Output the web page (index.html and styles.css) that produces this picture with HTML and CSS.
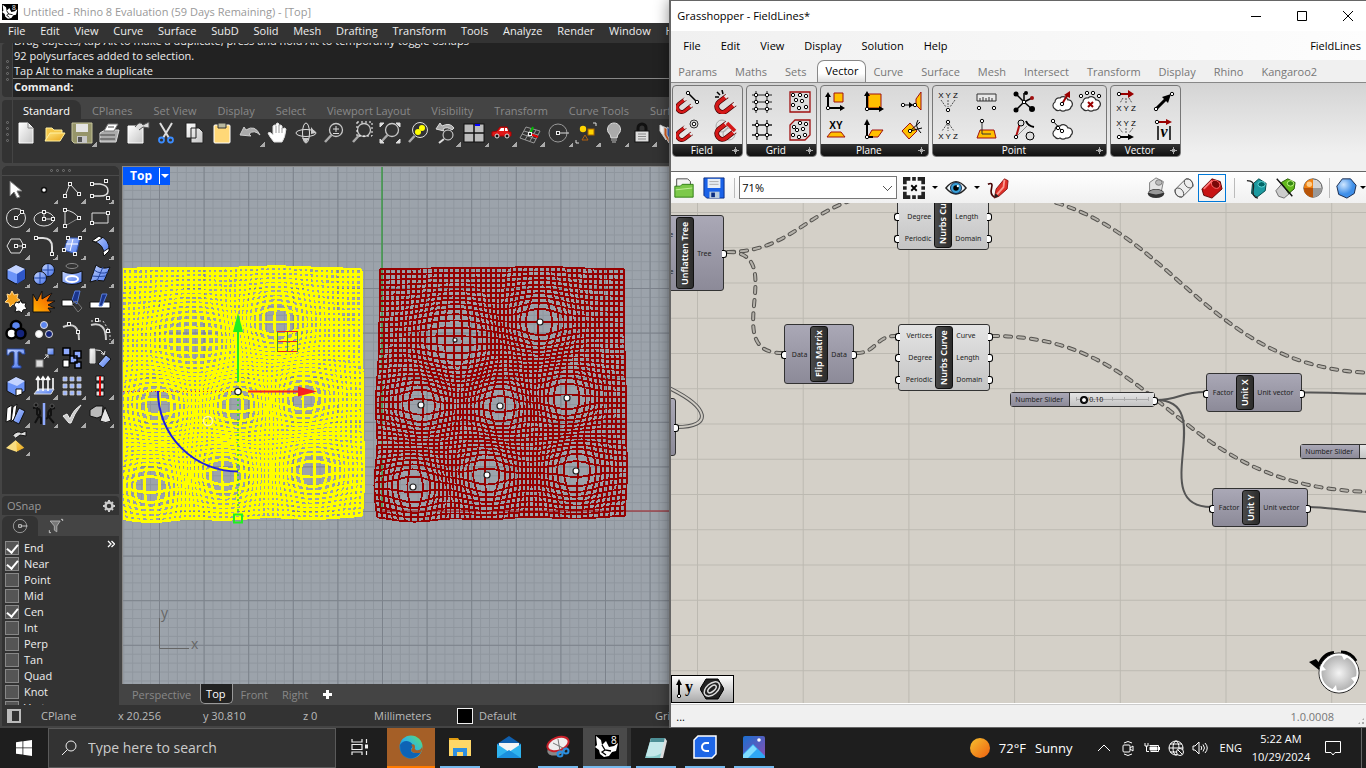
FILE: index.html
```
<!DOCTYPE html>
<html lang="en">
<head>
  <meta charset="UTF-8">
  <meta name="viewport" content="width=device-width, initial-scale=1.0">
  <title>Rhino and Grasshopper</title>
  <link rel="stylesheet" href="styles.css">
</head>
<body>

<!-- shared icon parts -->
<svg class="defs" aria-hidden="true">
  <defs>
    <linearGradient id="blue" x1="0" y1="0" x2="1" y2="1"><stop offset="0" stop-color="#c9d8ff"/><stop offset="1" stop-color="#4472ec"/></linearGradient>
    <linearGradient id="paper" x1="0" y1="0" x2="1" y2="1"><stop offset="0" stop-color="#fff"/><stop offset="1" stop-color="#c4c4c4"/></linearGradient>
    <linearGradient id="gold" x1="0" y1="0" x2="1" y2="1"><stop offset="0" stop-color="#ffe680"/><stop offset="1" stop-color="#e8a417"/></linearGradient>
    <linearGradient id="fire" x1="0" y1="1" x2="1" y2="0"><stop offset="0" stop-color="#ffb300"/><stop offset="1" stop-color="#f04a00"/></linearGradient>
    <linearGradient id="sun" x1="0" y1="0" x2="1" y2="1"><stop offset="0" stop-color="#f6c12f"/><stop offset="1" stop-color="#ee5f10"/></linearGradient>
    <linearGradient id="edge" x1="0" y1="1" x2="1" y2="0"><stop offset="0" stop-color="#0c59a4"/><stop offset=".5" stop-color="#2bb3e6"/><stop offset="1" stop-color="#5fe06a"/></linearGradient>
    <linearGradient id="photo" x1="0" y1="0" x2="1" y2="1"><stop offset="0" stop-color="#1a6fd0"/><stop offset="1" stop-color="#8a4fb0"/></linearGradient>
    <radialGradient id="dial"><stop offset="0" stop-color="#f4f4f4"/><stop offset="1" stop-color="#a9a9a9"/></radialGradient>
    <radialGradient id="ball" cx=".35" cy=".3"><stop offset="0" stop-color="#cfe6ff"/><stop offset="1" stop-color="#3f8fe8"/></radialGradient>
    <g id="pt"><rect x="-1.5" y="-1.5" width="3" height="3" fill="#222" stroke="#eee" stroke-width="1"/></g>
    <g id="dot"><circle r="1.7" fill="#fff" stroke="#000" stroke-width="1"/></g>
    <g id="lens"><circle cx="14" cy="9" r="6.5" fill="none" stroke="#c8c8c8" stroke-width="1.3"/><path d="M9.500 14L3 21" stroke="#aaa" stroke-width="2.500"/></g>
    <g id="magnet"><path d="M13 5L5 11a5.500 5.500 0 0 0 7 9L21 13" fill="none" stroke="#400" stroke-width="5"/><path d="M13 5L5 11a5.500 5.500 0 0 0 7 9L21 13" fill="none" stroke="#d41818" stroke-width="3.500"/><path d="M14 4l-3 2.500M22 12.200l-3 2.500" fill="none" stroke="#e4e4e4" stroke-width="3.500"/></g>
    <g id="cloud"><path d="M5 19a4 4 0 0 1 0-7 4 4 0 0 1 5-4 5 5 0 0 1 8 2 4 4 0 0 1 3 7 4 4 0 0 1-5 3 5 5 0 0 1-6 0 4 4 0 0 1-5-1z" fill="#fff" stroke="#333" stroke-width="1.200"/></g>
    <g id="rhino"><rect width="24" height="24" fill="#000"/><path d="M1 1l5 4 1 5 4-4 3 6 5-1 4-3-2 8-4 1-3 4-5 1-4-3-1-4-4-3 2-2z" fill="#fff"/><path d="M7 10l3 5 6 1M10 15l-3 2 4 3" stroke="#000" stroke-width="1.300" fill="none"/></g>
  </defs>
</svg>

<div class="desktop">

  <section class="rhino">
    <header class="rhino-title">
      <svg class="app-icon" viewBox="0 0 24 24"><use href="#rhino"/><text x="15" y="9" class="rhino-eight">8</text></svg>
      Untitled - Rhino 8 Evaluation (59 Days Remaining) - [Top]
    </header>

    <nav class="rhino-menu">
      <a href="#">File</a><a href="#">Edit</a><a href="#">View</a><a href="#">Curve</a><a href="#">Surface</a><a href="#">SubD</a><a href="#">Solid</a><a href="#">Mesh</a><a href="#">Drafting</a><a href="#">Transform</a><a href="#">Tools</a><a href="#">Analyze</a><a href="#">Render</a><a href="#">Window</a><a href="#">Help</a>
    </nav>

    <div class="docked command">
      <div class="grip"><i></i><i></i><i></i><i></i></div>
      <div class="command-area">
        <div class="command-log">
          <p>Drag objects, tap Alt to make a duplicate, press and hold Alt to temporarily toggle osnaps</p>
          <p>92 polysurfaces added to selection.</p>
          <p>Tap Alt to make a duplicate</p>
        </div>
        <label class="prompt">Command: <input type="text" class="prompt-input"></label>
      </div>
    </div>

    <div class="docked toolbar">
      <div class="grip"><i></i><i></i><i></i><i></i></div>
      <div class="toolbar-area">
        <nav class="toolbar-tabs">
          <a href="#" class="active">Standard</a><a href="#">CPlanes</a><a href="#">Set View</a><a href="#">Display</a><a href="#">Select</a><a href="#">Viewport Layout</a><a href="#">Visibility</a><a href="#">Transform</a><a href="#">Curve Tools</a><a href="#">Surface Tools</a>
        </nav>
        <div class="toolbar-icons">
          <button class="tool" aria-label="New"><svg viewBox="0 0 24 24"><path d="M5 2h9l5 5v15H5z" fill="url(#paper)" stroke="#fff"/><path d="M14 2v5h5" stroke="#888"/></svg></button>
          <button class="tool" aria-label="Open"><svg viewBox="0 0 24 24"><path d="M4 20V7h6l2 2h8v3" fill="#f5c84a" stroke="#fff0a0"/><path d="M3 20l5-8h15l-5 8z" fill="url(#gold)" stroke="#fff0a0"/></svg></button>
          <button class="tool more" aria-label="Save"><svg viewBox="0 0 24 24"><path d="M2 2h20v20H4l-2-2z" fill="#96956a" stroke="#c6c49b"/><path d="M6 3h12v8H6z" fill="#e4e4e4" stroke="none"/><path d="M7 15h10v7H7z" fill="#c8c8c8" stroke="none"/><path d="M8 16h4v5H8z" fill="#555" stroke="none"/></svg></button>
          <button class="tool" aria-label="Print"><svg viewBox="0 0 24 24"><path d="M2 12l5-3h14l-3 12H2z" fill="#aaa" stroke="#ddd"/><path d="M6 10l4-7h10l-4 7z" fill="#fff" stroke="#777"/><path d="M2 14h15M2 18h15M10 6h6" stroke="#444"/></svg></button>
          <button class="tool" aria-label="Properties"><svg viewBox="0 0 24 24"><path d="M2 5h15v17H2z" fill="url(#paper)" stroke="#fff"/><path d="M9 6q5-7 8-2l6-3v6l-6-1-4 3" fill="#ddd" stroke="#555"/></svg></button>
          <button class="tool" aria-label="Cut"><svg viewBox="0 0 24 24"><path d="M6 2l9 15M18 2L9 17" stroke="#ddd" stroke-width="2"/><circle cx="7.500" cy="19" r="2.500" stroke="#3b8cff" stroke-width="1.800"/><circle cx="16.500" cy="19" r="2.500" stroke="#3b8cff" stroke-width="1.800"/></svg></button>
          <button class="tool" aria-label="Copy"><svg viewBox="0 0 24 24"><path d="M4 2h10v15H4zM9 7h8l4 4v11H9z" fill="url(#paper)" stroke="#222"/></svg></button>
          <button class="tool" aria-label="Paste"><svg viewBox="0 0 24 24"><rect x="4" y="4" width="16" height="18" rx="1" fill="#ffd877" stroke="#fff"/><path d="M8 2h8v5H8z" fill="#b9b9a0" stroke="#333"/></svg></button>
          <button class="tool more" aria-label="Undo"><svg viewBox="0 0 24 24"><path d="M2 14l4-8 2 3q9-6 14 5-6-6-11-1l2 2z" fill="#aaa" stroke="#ccc"/></svg></button>
          <button class="tool" aria-label="Pan"><svg viewBox="0 0 24 24"><path d="M8 21q-5-6-6-9 2-2 5 2V5q2-2 3 0V3q2-2 3 0v2q2-2 3 0v3q3-2 4 0-1 9-4 13z" fill="#fff" stroke="#ddd"/><path d="M10 5v7M13 4v8M16 7v5" stroke="#999"/></svg></button>
          <button class="tool" aria-label="Rotate view"><svg viewBox="0 0 24 24"><ellipse cx="12" cy="12" rx="10" ry="3.500"/><ellipse cx="12" cy="12" rx="3.500" ry="10"/><path d="M17 6l5 6-5 1zM8 17l4 5 3-5z" fill="#ccc" stroke="none"/></svg></button>
          <button class="tool" aria-label="Zoom"><svg viewBox="0 0 24 24"><use href="#lens"/><path d="M11 8h6M14 5v6M11 12.500h6"/></svg></button>
          <button class="tool" aria-label="Zoom window"><svg viewBox="0 0 24 24"><use href="#lens"/><path d="M7 1h15v14H7z" stroke="#fff" stroke-dasharray="2 2"/></svg></button>
          <button class="tool" aria-label="Zoom extents"><svg viewBox="0 0 24 24"><use href="#lens"/><path d="M2 2h4l-4 4zM22 2v4l-4-4zM22 22h-4l4-4zM2 22v-4l4 4z" fill="#ddd"/></svg></button>
          <button class="tool" aria-label="Zoom selected"><svg viewBox="0 0 24 24"><circle cx="14" cy="9" r="7.500"/><path d="M8.500 15L3 21" stroke="#aaa" stroke-width="2.500"/><circle cx="16" cy="7" r="3" fill="#ff0" stroke="none"/><circle cx="12" cy="11" r="3" fill="#ff0" stroke="none"/></svg></button>
          <button class="tool more" aria-label="Undo view"><svg viewBox="0 0 24 24"><path d="M2 8l4-6 2 3q8-4 12 2l-2 2q-5-4-9-1l1 2z" fill="#aaa"/><circle cx="14" cy="14" r="5"/><path d="M10 18l-5 4" stroke-width="2"/></svg></button>
          <button class="tool more" aria-label="Four viewports"><svg viewBox="0 0 24 24"><rect x="2" y="3" width="20" height="18" fill="#bdbdbd" stroke="#111"/><path d="M12 3v18M2 12h20" stroke="#111" stroke-width="1.500"/><path d="M13 4h5" stroke="#00f" stroke-width="2"/></svg></button>
          <button class="tool more" aria-label="Set view"><svg viewBox="0 0 24 24"><path d="M2 15v-4l5-1 3-4h7l2 5h2v4z" fill="#e01818" stroke="#a00"/><path d="M11 7h3v3H9zM15 7h2l1 3h-3z" fill="#fff" stroke="none"/><circle cx="7" cy="15" r="2" fill="#111"/><circle cx="17" cy="15" r="2" fill="#111"/></svg></button>
          <button class="tool more" aria-label="Set CPlane"><svg viewBox="0 0 24 24"><path d="M8 6l14 4-6 12-14-5zM6 10l14 4M4 13l14 5M13 8l-6 11M18 9l-6 11" stroke="#999"/><path d="M12 13l8 3" stroke="#e00" stroke-width="2"/><path d="M12 13l3-7" stroke="#0b0" stroke-width="2"/><use href="#pt" x="12" y="13"/></svg></button>
          <button class="tool more" aria-label="Object snap"><svg viewBox="0 0 24 24"><circle cx="12" cy="12" r="9" stroke="#999"/><path d="M12 12h11"/><use href="#pt" x="12" y="12"/></svg></button>
          <button class="tool more" aria-label="Select"><svg viewBox="0 0 24 24"><path d="M19 2h3v3M2 19v3h3"/><circle cx="9" cy="8" r="3.200" fill="#ffd400" stroke="none"/><rect x="14" y="8" width="6" height="6" fill="#ffd400" stroke="#a60"/><path d="M8 19l3-5 3 5z" stroke="#b06010"/></svg></button>
          <button class="tool more" aria-label="Hide"><svg viewBox="0 0 24 24"><path d="M9 17q0-3-3-6a6.500 6.500 0 1 1 12 0q-3 3-3 6z" fill="#aaa" stroke="#ddd"/><path d="M9 19h6M10 21h4" stroke="#bbb"/></svg></button>
          <button class="tool more" aria-label="Lock"><svg viewBox="0 0 24 24"><path d="M8 10V7a4 4 0 0 1 8 0v3" stroke="#111" stroke-width="3"/><rect x="5" y="10" width="14" height="11" fill="#ddd" stroke="#111"/><path d="M8 13h8M8 15.500h8M8 18h8" stroke="#888"/></svg></button>
          <button class="tool" aria-label="Layers"><svg viewBox="0 0 24 24"><path d="M2 4l6 3v12l-6-9z" fill="#fff"/><path d="M6 6l5 3v13l-5-8z" fill="#e06020"/><path d="M9 6l5 3v13l-5-8z" fill="#36c"/></svg></button>
        </div>
      </div>
    </div>

    <div class="rhino-main">
      <aside class="sidebar">
        <div class="palette">
          <div class="grip flat"><i></i><i></i><i></i><i></i></div>
          <div class="palette-grid">
            <button class="tool" aria-label="Cancel"><svg viewBox="0 0 24 24"><path d="M6 3v15l4-4 3 6 3-1-3-6h5z" fill="#fff" stroke="#777"/></svg></button>
            <button class="tool more" aria-label="Point"><svg viewBox="0 0 24 24"><circle cx="12" cy="12" r="2.500" fill="#fff" stroke="#111" stroke-width="1.500"/></svg></button>
            <button class="tool more" aria-label="Polyline"><svg viewBox="0 0 24 24"><path d="M5 18l5-12 9 10"/><use href="#pt" x="5" y="18"/><use href="#pt" x="10" y="6"/><use href="#pt" x="19" y="16"/></svg></button>
            <button class="tool more" aria-label="Curve"><svg viewBox="0 0 24 24"><path d="M4 6h8q8 1 8 7 0 5-8 5-5 0-8 0" stroke-width="1.500"/><use href="#pt" x="4" y="6"/><use href="#pt" x="18" y="3"/><use href="#pt" x="4" y="18"/><use href="#pt" x="20" y="20"/></svg></button>

            <button class="tool more" aria-label="Circle"><svg viewBox="0 0 24 24"><circle cx="12" cy="12" r="9.500"/><path d="M12 12l6-6"/><use href="#pt" x="12" y="12"/><use href="#pt" x="18" y="6"/></svg></button>
            <button class="tool more" aria-label="Ellipse"><svg viewBox="0 0 24 24"><ellipse cx="12" cy="13" rx="10" ry="7"/><path d="M12 6v7h9"/><use href="#pt" x="12" y="6"/><use href="#pt" x="12" y="13"/><use href="#pt" x="21" y="13"/></svg></button>
            <button class="tool more" aria-label="Arc"><svg viewBox="0 0 24 24"><path d="M5 20V4q9 1 14 8"/><path d="M19 12L5 20" stroke="#888"/><use href="#pt" x="5" y="4"/><use href="#pt" x="19" y="12"/><use href="#pt" x="5" y="20"/></svg></button>
            <button class="tool more" aria-label="Rectangle"><svg viewBox="0 0 24 24"><path d="M4 7h16v10H4z"/><use href="#pt" x="4" y="17"/><use href="#pt" x="20" y="7"/></svg></button>

            <button class="tool more" aria-label="Polygon"><svg viewBox="0 0 24 24"><path d="M3 12l4-7h9l4 7-4 7H7zM12 12h8"/><use href="#pt" x="12" y="12"/><use href="#pt" x="20" y="12"/></svg></button>
            <button class="tool more" aria-label="Fillet"><svg viewBox="0 0 24 24"><path d="M4 4h7q9 0 9 9v6" stroke-width="2"/><use href="#pt" x="4" y="4"/><use href="#pt" x="20" y="20"/></svg></button>
            <button class="tool more" aria-label="Surface from points"><svg viewBox="0 0 24 24"><path d="M8 4h12l-4 16-12-4z" fill="url(#blue)" stroke="#3457b0"/><path d="M13 5l-3 12M6 10h12" stroke="#fff"/><use href="#pt" x="8" y="4"/><use href="#pt" x="20" y="4"/><use href="#pt" x="4" y="16"/><use href="#pt" x="15" y="20"/></svg></button>
            <button class="tool more" aria-label="Sweep"><svg viewBox="0 0 24 24"><path d="M4 7l7-5q11 3 10 15l-5 5q1-12-12-15z" fill="url(#blue)" stroke="#111"/><path d="M4 7l7-5 3 2-6 4zM16 22l5-5v-3l-6 4z" fill="#fff" stroke="#111"/></svg></button>

            <button class="tool more" aria-label="Box"><svg viewBox="0 0 24 24"><path d="M3 8l9-5 9 4v10l-9 5-9-5z" fill="#6c94f8" stroke="#111"/><path d="M3 8l9-5 9 4-8 5z" fill="#c3d3ff" stroke="none"/><path d="M13 12l8-5v10l-8 5z" fill="#2f57c8" stroke="none"/></svg></button>
            <button class="tool more" aria-label="Boolean union"><svg viewBox="0 0 24 24"><circle cx="16" cy="8" r="6.500" fill="url(#blue)" stroke="#111"/><circle cx="8" cy="16" r="6.500" fill="url(#blue)" stroke="#111"/><path d="M16 2v12M10 8h12M8 10v12M2 16h12" stroke="#2348a8"/></svg></button>
            <button class="tool more" aria-label="Revolve"><svg viewBox="0 0 24 24"><ellipse cx="12" cy="4" rx="6" ry="2.500" stroke="#888"/><path d="M2 9q10 5 20 0v11q-10 5-20 0z" fill="url(#blue)" stroke="#111"/><ellipse cx="12" cy="17" rx="6" ry="3" stroke="#fff" stroke-width="2"/></svg></button>
            <button class="tool more" aria-label="Patch"><svg viewBox="0 0 24 24"><path d="M8 3q6 5 14 2l-6 14q-8-2-14 1z" fill="url(#blue)" stroke="#111"/><path d="M6 8q7 5 14 2M4 14q7 1 14 0M15 5l-6 14" stroke="#27479f"/></svg></button>

            <button class="tool more" aria-label="Options"><svg viewBox="0 0 24 24"><path d="M3 4l3 1 2-4 2 4 4-1-1 4 3 2-4 2 1 4-4-2-3 3-1-4-4-1 3-3z" fill="#f5a21b" stroke="#ffd890"/><path d="M12 12l3 1 2-3 1 3 4 0-1 3 2 3-4 1-1 3-3-2-4 1 1-4-2-3z" fill="#fff" stroke="#111"/></svg></button>
            <button class="tool" aria-label="Explode"><svg viewBox="0 0 24 24"><path d="M1 22V4l4 7 5-10v8L20 3l-5 8 8 0-7 4 7 3-7 0 3 4z" fill="url(#fire)" stroke="#111"/></svg></button>
            <button class="tool" aria-label="Trim"><svg viewBox="0 0 24 24"><path d="M12 10l3-9h5l-3 13z" fill="#1a348c" stroke="#5a7fd8"/><path d="M2 10h10l2 6H2z" fill="#fff" stroke="#111"/><path d="M12 14l4-3 6 7-4 4z" stroke="#777"/></svg></button>
            <button class="tool" aria-label="Split"><svg viewBox="0 0 24 24"><path d="M2 12h20v6H2z" fill="#fff" stroke="#111"/><path d="M11 16l3-12h5l-5 12z" fill="#1a348c" stroke="#5a7fd8"/></svg></button>

            <button class="tool more" aria-label="Group"><svg viewBox="0 0 24 24"><circle cx="12" cy="8" r="5" fill="#5c86f0" stroke="#000" stroke-width="2.500"/><circle cx="7.500" cy="15.500" r="5" fill="#fff" stroke="#000" stroke-width="2.500"/><circle cx="16.500" cy="15.500" r="5" fill="#14247c" stroke="#000" stroke-width="2.500"/></svg></button>
            <button class="tool" aria-label="Ungroup"><svg viewBox="0 0 24 24"><circle cx="12" cy="7" r="3.500" fill="#5c86f0"/><circle cx="7" cy="16" r="3.500" fill="#fff"/><circle cx="17" cy="16" r="3.500" fill="#14247c"/></svg></button>
            <button class="tool" aria-label="Edit points"><svg viewBox="0 0 24 24"><path d="M3 9q16-7 16 13" stroke="#ccc" stroke-width="2"/><use href="#pt" x="9" y="6"/><use href="#pt" x="18" y="14"/></svg></button>
            <button class="tool more" aria-label="Control points"><svg viewBox="0 0 24 24"><path d="M3 7q15-4 15 15" stroke="#ccc" stroke-width="2"/><path d="M3 3h12l7 11v8" stroke-dasharray="2 2"/><use href="#pt" x="9" y="2"/><use href="#pt" x="20" y="13"/></svg></button>

            <button class="tool" aria-label="Text"><svg viewBox="0 0 24 24"><path d="M3 3h17l1 5h-3q-1-3-4-2v12q0 2 3 2v2H8v-2q2 0 2-2V6Q5 5 5 9H3z" fill="url(#blue)" stroke="#27479f"/></svg></button>
            <button class="tool more" aria-label="Move"><svg viewBox="0 0 24 24"><rect x="4" y="14" width="7" height="7" fill="#ddd" stroke="#888"/><rect x="15" y="2" width="7" height="7" fill="url(#blue)" stroke="#222"/><path d="M12 13l4-4M13 9h3v3"/></svg></button>
            <button class="tool" aria-label="Copy objects"><svg viewBox="0 0 24 24"><path d="M3 2h7v7H3zM14 5h7v7h-7zM10 10h7v7h-7zM15 16h6v6h-6z" fill="#8faaff" stroke="#000" stroke-width="1.500"/><path d="M3 14h6v7H3z" fill="#fff" stroke="#000"/></svg></button>
            <button class="tool" aria-label="Rotate"><svg viewBox="0 0 24 24"><path d="M2 3h5v14H2z" fill="url(#paper)"/><path d="M10 18l8-9 5 4-8 9z" fill="url(#blue)" stroke="#111"/><path d="M8 4q5-1 8 4M13 7l3 2 1-4"/></svg></button>

            <button class="tool more" aria-label="Solid edit"><svg viewBox="0 0 24 24"><path d="M3 8l9-5 9 4v10l-9 5-9-5z" fill="#6c94f8" stroke="#111"/><path d="M3 8l9-5 9 4-8 5z" fill="#c3d3ff" stroke="none"/><path d="M12 15h6v5l-6 2z" fill="#fff" stroke="#111"/></svg></button>
            <button class="tool more" aria-label="Extrude"><svg viewBox="0 0 24 24"><path d="M2 20l4-5h16l-3 5z" fill="url(#blue)"/><path d="M6 17V4M11 17V4M16 17V4M21 15V4M4 6l2-3 2 3M9 6l2-3 2 3M14 6l2-3 2 3" stroke="#fff" stroke-width="1.600"/></svg></button>
            <button class="tool more" aria-label="Array"><svg viewBox="0 0 24 24"><path d="M3 3h4v4H3zM10 3h4v4h-4zM17 3h4v4h-4zM3 10h4v4H3zM10 10h4v4h-4zM17 10h4v4h-4zM3 17h4v4H3zM10 17h4v4h-4zM17 17h4v4h-4z" fill="#9db6ff" stroke="#ccc" stroke-width=".8"/></svg></button>
            <button class="tool more" aria-label="Align"><svg viewBox="0 0 24 24"><path d="M8 2h8v5H8zM8 9h8v6H8zM8 17h8v5H8z" fill="#ddd" stroke="#111"/><path d="M12 2v20" stroke="#e00000" stroke-width="2"/></svg></button>

            <button class="tool more" aria-label="Bend"><svg viewBox="0 0 24 24"><path d="M3 6l5-3-1 15-5 2zM9 5l4-3-2 14-4 4z" fill="#fff" stroke="#111"/><path d="M15 6l6 3-6 13-6-3z" fill="url(#blue)" stroke="#111"/></svg></button>
            <button class="tool more" aria-label="Flow"><svg viewBox="0 0 24 24"><path d="M1 6q8-1 7 6l-5 9M5 4v8l4 4v6M23 6q-8 1-7 8l6 7M19 5v8l-5 4" stroke="#111" stroke-width="2"/><circle cx="4" cy="3" r="2" fill="#111" stroke="#555"/><circle cx="20" cy="4" r="2" fill="#111" stroke="#555"/><path d="M12 1v22" stroke="#8faaff" stroke-width="2.500"/></svg></button>
            <button class="tool more" aria-label="Check"><svg viewBox="0 0 24 24"><path d="M3 14l4-2 3 5Q13 8 21 3 14 12 11 21H9z" fill="#ccc" stroke="#eee"/></svg></button>
            <button class="tool more" aria-label="Mesh"><svg viewBox="0 0 24 24"><path d="M2 8l6-4h7l-1 10-5 2-7-2z" fill="#bbb" stroke="#111"/><path d="M17 5l6 14q-5 3-11 0z" fill="#e4e4e4" stroke="#111"/></svg></button>

            <button class="tool more" aria-label="Render tools"><svg viewBox="0 0 24 24"><path d="M12 10l9 8-8 4-11-4z" fill="url(#gold)" stroke="#333"/><path d="M12 10l1 12-11-4z" fill="#f8dc80" stroke="none"/><path d="M9 5q5-5 8-2l5-2v5l-6-1-4 3" fill="#ddd" stroke="#111"/></svg></button>
          </div>
        </div>

        <div class="panel-head">OSnap
          <svg class="gear" viewBox="0 0 14 14"><circle cx="7" cy="7" r="3.500" fill="none" stroke="#ccc" stroke-width="2.500"/><path d="M7 1v2M7 11v2M1 7h2M11 7h2M3 3l1 1M10 10l1 1M11 3l-1 1M4 10l-1 1" stroke="#ccc" stroke-width="2"/></svg>
        </div>
        <div class="panel-tabs">
          <button class="panel-tab active" aria-label="Object snaps"><svg viewBox="0 0 24 24"><circle cx="12" cy="12" r="8" stroke="#aaa"/><path d="M12 12h9"/><use href="#pt" x="12" y="12"/></svg></button>
          <button class="panel-tab" aria-label="Filter"><svg viewBox="0 0 24 24"><path d="M5 6h12l-4 6v7l-3-2v-5z" fill="#777" stroke="#bbb"/><path d="M18 4h2v2M4 17v3h2" stroke="#ddd"/></svg></button>
        </div>
        <div class="osnaps">
          <div class="osnap-list">
            <label><input type="checkbox" checked>End</label>
            <label><input type="checkbox" checked>Near</label>
            <label><input type="checkbox">Point</label>
            <label><input type="checkbox">Mid</label>
            <label><input type="checkbox" checked>Cen</label>
            <label><input type="checkbox">Int</label>
            <label><input type="checkbox">Perp</label>
            <label><input type="checkbox">Tan</label>
            <label><input type="checkbox">Quad</label>
            <label><input type="checkbox">Knot</label>
            <label><input type="checkbox">Vertex</label>
          </div>
          <svg class="expand" viewBox="0 0 8 8"><path d="M1 1l3 3-3 3M4.500 1l3 3-3 3" fill="none" stroke="#fff" stroke-width="1.300"/></svg>
        </div>
      </aside>

      <div class="view-column">
        <div class="viewport">
          <svg class="scene" id="scene">
            <defs>
              <pattern id="gridMinor" width="8.920" height="8.920" patternUnits="userSpaceOnUse" x="382" y="511"><path d="M0 .5H9M.5 0V9" stroke="#8f969e" fill="none"/></pattern>
              <pattern id="gridMajor" width="44.600" height="44.600" patternUnits="userSpaceOnUse" x="382" y="511"><path d="M0 .5H45M.5 0V45" stroke="#7c828b" fill="none"/></pattern>
            </defs>
            <g transform="translate(-123 -167)">
              <rect x="123" y="167" width="1300" height="1000" fill="url(#gridMinor)"/>
              <rect x="123" y="167" width="1300" height="1000" fill="url(#gridMajor)"/>
              <path d="M382 167V511" stroke="#3f9a48" stroke-width="1.500"/>
              <path d="M382 511H1400" stroke="#a0474e" stroke-width="1.500"/>
              <g id="meshes"></g>
              <path d="M123 391.500H236" stroke="#f02020" stroke-dasharray="1 3"/>
              <path d="M238 394V513" stroke="#20e020" stroke-width="1.500" stroke-dasharray="2 3"/>
              <path d="M277 331.500h21M277 341.500h21M277 351.500h21" stroke="#f02020"/>
              <path d="M277.500 332v20M287.500 332v20M297.500 332v20" stroke="#40a020"/>
              <circle cx="208" cy="421" r="4.500" fill="none" stroke="#fff8b0" stroke-width="1.500"/>
              <path d="M158 391A80 80 0 0 0 238 471.500" fill="none" stroke="#2020e0" stroke-width="2"/>
              <path d="M238 382V331" stroke="#20f020" stroke-width="2"/><path d="M238 313l5 19h-10z" fill="#20f020"/>
              <path d="M248 391.500H299" stroke="#f82020" stroke-width="2"/><path d="M317 391.500l-19-5v10z" fill="#f82020"/>
              <circle cx="238" cy="391.500" r="3.200" fill="#fff" stroke="#222" stroke-width="1.300"/>
              <rect x="234" y="514.500" width="8" height="8" fill="none" stroke="#20f020" stroke-width="2"/>
              <path d="M159.500 618v30.500H189" fill="none" stroke="#666"/>
              <text x="161" y="618" class="axis">y</text><text x="191" y="649" class="axis">x</text>
            </g>
          </svg>
          <button class="view-label">Top<i></i></button>
        </div>
        <nav class="view-tabs">
          <a href="#">Perspective</a><a href="#" class="active">Top</a><a href="#">Front</a><a href="#">Right</a>
          <button class="add-view" aria-label="Add viewport"><svg viewBox="0 0 9 9"><path d="M4.500 0v9M0 4.500h9" stroke="#fff" stroke-width="3"/></svg></button>
        </nav>
      </div>
    </div>

    <footer class="rhino-status">
      <button class="side-toggle" aria-label="Toggle sidebar"></button>
      <span class="w-plane">CPlane</span><span class="w-x">x 20.256</span><span class="w-y">y 30.810</span><span class="w-z">z 0</span><span class="w-units">Millimeters</span>
      <i class="swatch"></i><span class="w-layer">Default</span><span>Grid Snap</span>
    </footer>
  </section>

  <section class="gh">
    <header class="gh-title">
      <span>Grasshopper - FieldLines*</span>
      <div class="win-buttons">
        <button aria-label="Minimize"><svg viewBox="0 0 12 12"><path d="M1 6.500h10"/></svg></button>
        <button aria-label="Maximize"><svg viewBox="0 0 12 12"><path d="M1.500 1.500h9v9h-9z"/></svg></button>
        <button aria-label="Close"><svg viewBox="0 0 12 12"><path d="M1 1l10 10M11 1L1 11"/></svg></button>
      </div>
    </header>
    <nav class="gh-menu">
      <a href="#">File</a><a href="#">Edit</a><a href="#">View</a><a href="#">Display</a><a href="#">Solution</a><a href="#">Help</a>
      <span class="doc-name">FieldLines</span>
    </nav>
    <nav class="gh-tabs">
      <a href="#">Params</a><a href="#">Maths</a><a href="#">Sets</a><a href="#" class="active">Vector</a><a href="#">Curve</a><a href="#">Surface</a><a href="#">Mesh</a><a href="#">Intersect</a><a href="#">Transform</a><a href="#">Display</a><a href="#">Rhino</a><a href="#">Kangaroo2</a>
    </nav>

    <div class="ribbon">
      <div class="ribbon-panel">
        <div class="ribbon-icons cols-2">
          <button aria-label="Line charge"><svg viewBox="0 0 24 24"><g transform="translate(-1 5) scale(.8)"><use href="#magnet"/></g><path d="M12 3l9 9" stroke="#000" stroke-width="1.500"/><use href="#dot" x="12" y="3"/><use href="#dot" x="21" y="12"/></svg></button>
          <button aria-label="Evaluate field"><svg viewBox="0 0 24 24"><use href="#magnet" y="1"/><path d="M3 2l3 3M8 0l1 4M1 7h4" stroke="#000" stroke-width="1.500"/></svg></button>
          <button aria-label="Point charge"><svg viewBox="0 0 24 24"><g transform="translate(-1 5) scale(.8)"><use href="#magnet"/></g><circle cx="18" cy="6" r="4" fill="none" stroke="#333"/><circle cx="18" cy="6" r="1.800" fill="#fff" stroke="#000"/></svg></button>
          <button aria-label="Merge fields"><svg viewBox="0 0 24 24"><circle cx="8" cy="8" r="6" fill="none" stroke="#aaa"/><circle cx="15" cy="16" r="6" fill="none" stroke="#aaa"/><use href="#magnet"/><path d="M13 5l8 8" stroke="#d41818" stroke-width="3.500"/></svg></button>
        </div>
        <div class="ribbon-name">Field<b></b></div>
      </div>
      <div class="ribbon-panel">
        <div class="ribbon-icons cols-2">
          <button aria-label="Rectangular grid"><svg viewBox="0 0 24 24"><path d="M2 5h20M2 12h20M2 19h20M6 1v22M17 1v22" stroke="#222"/><use href="#dot" x="6" y="5"/><use href="#dot" x="17" y="5"/><use href="#dot" x="6" y="12"/><use href="#dot" x="17" y="12"/><use href="#dot" x="6" y="19"/><use href="#dot" x="17" y="19"/></svg></button>
          <button aria-label="Populate 2D"><svg viewBox="0 0 24 24"><path d="M2 2h20v20H2z" fill="#ddd" stroke="#a01010" stroke-width="1.300"/><g><use href="#dot" x="5" y="5"/><use href="#dot" x="12" y="5"/><use href="#dot" x="18" y="6"/><use href="#dot" x="8" y="10"/><use href="#dot" x="14" y="11"/><use href="#dot" x="5" y="15"/><use href="#dot" x="11" y="18"/><use href="#dot" x="18" y="17"/></g></svg></button>
          <button aria-label="Square grid"><svg viewBox="0 0 24 24"><path d="M2 7h20M2 17h20M7 2v20M17 2v20" stroke="#222" stroke-width="1.300"/><use href="#dot" x="7" y="7"/><use href="#dot" x="17" y="7"/><use href="#dot" x="7" y="17"/><use href="#dot" x="17" y="17"/></svg></button>
          <button aria-label="Populate 3D"><svg viewBox="0 0 24 24"><path d="M7 2h15v15l-5 5H2V7z" fill="#ddd" stroke="#a01010" stroke-width="1.300"/><g><use href="#dot" x="6" y="9"/><use href="#dot" x="12" y="5"/><use href="#dot" x="18" y="6"/><use href="#dot" x="9" y="12"/><use href="#dot" x="15" y="11"/><use href="#dot" x="5" y="17"/><use href="#dot" x="11" y="19"/><use href="#dot" x="17" y="17"/></g></svg></button>
        </div>
        <div class="ribbon-name">Grid<b></b></div>
      </div>
      <div class="ribbon-panel">
        <div class="ribbon-icons cols-3">
          <button aria-label="Adjust plane"><svg viewBox="0 0 24 24"><path d="M10 3h9v9h-9z" fill="#ffc000" stroke="#a01010"/><path d="M4 18V4M4 18h15" stroke="#000" stroke-width="2"/><path d="M1 7l3-5 3 5zM16 15l5 3-5 3z"/><use href="#dot" x="4" y="18"/></svg></button>
          <button aria-label="Construct plane"><svg viewBox="0 0 24 24"><path d="M6 4h13v14H6z" fill="#ffc000" stroke="#a01010"/><path d="M5 19V4M5 19h14" stroke="#000" stroke-width="2"/><path d="M2 6l3-5 3 5zM17 16l5 3-5 3z"/><use href="#dot" x="5" y="19"/></svg></button>
          <button aria-label="Align plane"><svg viewBox="0 0 24 24"><path d="M21 2v18l-5-5V9z" fill="#ffc000" stroke="#a01010"/><path d="M3 15h11" stroke="#000"/><path d="M9 12l4 3-4 3z"/><use href="#dot" x="3" y="15"/><use href="#dot" x="15" y="15"/></svg></button>
          <button aria-label="XY plane"><svg viewBox="0 0 24 24"><text x="12" y="11" class="glyph">XY</text><path d="M3 19l4-5h10l4 5z" fill="#ffc000" stroke="#a01010"/></svg></button>
          <button aria-label="Plane normal"><svg viewBox="0 0 24 24"><path d="M6 19l4-7h11l-5 7z" fill="#ffc000" stroke="#a01010"/><path d="M5 19V4M5 19h6" stroke="#000" stroke-width="2"/><path d="M2 7l3-6 3 6z"/><use href="#dot" x="5" y="19"/></svg></button>
          <button aria-label="Rotate plane"><svg viewBox="0 0 24 24"><path d="M2 13l8-8 7 8-8 8z" fill="#ffc000" stroke="#a01010"/><path d="M10 13l12-3M18 2q-4 6 3 13M10 13l10-9" stroke="#000" fill="none"/><use href="#dot" x="10" y="13"/></svg></button>
        </div>
        <div class="ribbon-name">Plane<b></b></div>
      </div>
      <div class="ribbon-panel">
        <div class="ribbon-icons cols-point">
          <button aria-label="Construct point"><svg viewBox="0 0 24 24"><text x="12" y="8" class="glyph small">X Y Z</text><path d="M5 10l5 7M12 10v7M19 10l-5 7" stroke="#555" stroke-dasharray="2 1"/><use href="#dot" x="12" y="20"/></svg></button>
          <button aria-label="Distance"><svg viewBox="0 0 24 24"><path d="M3 4h19v7H3z" fill="#e8e8e8" stroke="#333"/><path d="M6 11V8M9 11V7M12 11V8M15 11V7M18 11V8" stroke="#333"/><use href="#dot" x="5" y="18"/><use href="#dot" x="20" y="18"/></svg></button>
          <button aria-label="Point groups"><svg viewBox="0 0 24 24"><path d="M12 12L4 4M12 12L4 20M12 12l9 8M12 12l8-4M12 12V3" stroke="#000" stroke-width="1.500"/><circle cx="4" cy="4" r="2.500"/><circle cx="4" cy="20" r="2.500"/><circle cx="20" cy="19" r="3"/><circle cx="14" cy="3" r="2"/><circle cx="20" cy="8" r="2" fill="#a01010"/><use href="#dot" x="12" y="12"/></svg></button>
          <button aria-label="Closest point"><svg viewBox="0 0 24 24"><use href="#cloud"/><path d="M12 14l6-10" stroke="#900" stroke-width="2"/><path d="M14 5l6-4v7z" fill="#900"/><use href="#dot" x="12" y="14"/></svg></button>
          <button aria-label="Cull duplicates"><svg viewBox="0 0 24 24"><use href="#cloud"/><path d="M10 12l5 5M15 12l-5 5" stroke="#900" stroke-width="2"/><use href="#dot" x="3" y="6"/><use href="#dot" x="9" y="3"/><use href="#dot" x="15" y="3"/><use href="#dot" x="21" y="6"/></svg></button>
          <button aria-label="Deconstruct"><svg viewBox="0 0 24 24"><use href="#dot" x="12" y="4"/><path d="M11 6l-5 7M12 6v7M13 6l5 7" stroke="#555" stroke-dasharray="2 1"/><text x="12" y="21" class="glyph small">X Y Z</text></svg></button>
          <button aria-label="Project point"><svg viewBox="0 0 24 24"><path d="M3 20l3-8h14l2 8z" fill="#ffc000" stroke="#a01010"/><path d="M8 3v13h9" fill="none" stroke="#333"/><use href="#dot" x="8" y="3"/></svg></button>
          <button aria-label="Pull point"><svg viewBox="0 0 24 24"><path d="M4 19L8 5" stroke="#b01010" stroke-width="2"/><path d="M4 19L15 8" stroke="#888"/><circle cx="9" cy="5" r="3" fill="#ddd" stroke="#000"/><circle cx="18" cy="18" r="4" fill="#ddd" stroke="#000"/><path d="M14 3q2 5 8 6" fill="none" stroke="#000" stroke-width="2"/><use href="#dot" x="4" y="19"/></svg></button>
          <button aria-label="Sort points"><svg viewBox="0 0 24 24"><use href="#cloud"/><path d="M3 3l9 10" stroke="#000"/><use href="#dot" x="3" y="3"/><use href="#dot" x="8" y="10"/><use href="#dot" x="12" y="13"/></svg></button>
        </div>
        <div class="ribbon-name">Point<b></b></div>
      </div>
      <div class="ribbon-panel">
        <div class="ribbon-icons cols-2">
          <button aria-label="Deconstruct vector"><svg viewBox="0 0 24 24"><path d="M5 4h12" stroke="#900" stroke-width="2"/><path d="M14 0l6 4-6 4z" fill="#900"/><use href="#dot" x="5" y="4"/><path d="M9 8l-3 5M12 8v5M15 8l3 5" stroke="#555" stroke-dasharray="2 1"/><text x="12" y="21" class="glyph small">X Y Z</text></svg></button>
          <button aria-label="Vector 2 points"><svg viewBox="0 0 24 24"><path d="M4 19L15 8" stroke="#000" stroke-width="3"/><path d="M10 7l9-3-3 9z"/><use href="#dot" x="4" y="19"/><use href="#dot" x="20" y="4"/></svg></button>
          <button aria-label="Vector XYZ"><svg viewBox="0 0 24 24"><text x="12" y="8" class="glyph small">X Y Z</text><path d="M5 10l4 5M12 10v5M19 10l-4 5" stroke="#555" stroke-dasharray="2 1"/><path d="M5 19h12" stroke="#000" stroke-width="2"/><path d="M14 16l6 3-6 3z"/><use href="#dot" x="5" y="19"/></svg></button>
          <button aria-label="Vector length"><svg viewBox="0 0 24 24"><path d="M5 4h12" stroke="#900" stroke-width="2"/><path d="M14 1l6 3-6 3z" fill="#900"/><use href="#dot" x="5" y="4"/><path d="M6 8v14M18 8v14" stroke="#000" stroke-width="1.500"/><text x="12" y="19" class="glyph vee">v</text></svg></button>
        </div>
        <div class="ribbon-name">Vector<b></b></div>
      </div>
    </div>

    <div class="gh-toolbar">
      <button aria-label="Open file"><svg viewBox="0 0 24 24"><path d="M4 2h12l3 3v8H4z" fill="#f4f4f4" stroke="#444"/><path d="M2 10h6l2-2h12v14H2z" fill="#7cc94a" stroke="#2c7a12"/><path d="M3 14l18-2" stroke="#c8f0a0"/></svg></button>
      <button aria-label="Save file" class="gap-l"><svg viewBox="0 0 24 24"><path d="M1 1h22v22H4l-3-3z" fill="#1a62e8" stroke="#0a2c80"/><path d="M5 2h14v10H5z" fill="#e8eef5"/><path d="M7 5h10M7 8h10" stroke="#aaa"/><path d="M7 16h11v7H7z" fill="#bcd"/><path d="M9 17h4v5H9z" fill="#0a2c80"/></svg></button>
      <i class="sep"></i>
      <select class="zoom" aria-label="Zoom"><option>71%</option><option>100%</option></select>
      <button aria-label="Zoom extents"><svg viewBox="0 0 24 24"><path d="M2 8V2h6M16 2h6v6M22 16v6h-6M8 22H2v-6M10 2h4M10 22h4M2 10v4M22 10v4" fill="none" stroke="#222" stroke-width="4"/><path d="M9 9l6 6M15 9l-6 6" stroke="#000" stroke-width="2"/></svg></button>
      <i class="caret"></i>
      <button aria-label="Preview"><svg viewBox="0 0 24 24"><path d="M1 12q11-14 22 0-11 13-22 0z" fill="#eef6fa" stroke="#222" stroke-width="1.500"/><circle cx="12" cy="12" r="6" fill="#38a0d8" stroke="#124"/><circle cx="12" cy="12" r="3"/><circle cx="14" cy="10" r="1.200" fill="#fff"/></svg></button>
      <i class="caret"></i>
      <button aria-label="Sketch"><svg viewBox="0 0 24 24"><path d="M1 8q6-3 4 4t3 10" fill="none" stroke="#400" stroke-width="1.800"/><path d="M10 13L19 2l4 2-1 9-9 8-5 2z" fill="#e03028" stroke="#811"/><path d="M19 3l-1 8-7 8" fill="none" stroke="#fa9a90" stroke-width="2"/><path d="M8 23l1-5 4 3z" fill="#222"/></svg></button>

      <div class="gh-toolbar-right">
        <button aria-label="No preview"><svg viewBox="0 0 24 24"><path d="M5 6l7-5 8 4-2 10H5z" fill="#e4e4e4" stroke="#777"/><ellipse cx="15" cy="6" rx="3.500" ry="3" fill="#bbb" stroke="#777"/><ellipse cx="12" cy="18" rx="9" ry="5" fill="#333"/><path d="M3 17q9-7 18 0-9 4-18 0z" fill="#999"/></svg></button>
        <button aria-label="Wireframe"><svg viewBox="0 0 24 24"><path d="M2 14L14 2q7-1 8 8L10 22q-8 0-8-8z" fill="#eee" stroke="#555"/><ellipse cx="17" cy="7" rx="4" ry="5.500" transform="rotate(-40 17 7)" fill="none" stroke="#555"/><ellipse cx="7" cy="17" rx="4" ry="5.500" transform="rotate(-40 7 17)" fill="none" stroke="#555"/></svg></button>
        <button aria-label="Shaded" class="on"><svg viewBox="0 0 24 24"><path d="M1 13L12 2l9 3 2 8-11 10-9-3z" fill="#c81414" stroke="#500"/><ellipse cx="16" cy="8" rx="4" ry="5" transform="rotate(-50 16 8)" fill="#7a0808" stroke="#f66"/><path d="M3 13l9-9" stroke="#f77" stroke-width="2"/></svg></button>
        <i class="sep wide"></i>
        <button aria-label="Selected only"><svg viewBox="0 0 24 24"><path d="M7 8l7-6 8 5-1 8-9 7-6-4z" fill="#1c9aa0" stroke="#044"/><ellipse cx="17" cy="8" rx="4" ry="3" fill="#066" stroke="#6dd"/><path d="M1 4q9 0 7 9t5 10" fill="none" stroke="#222" stroke-width="1.300"/></svg></button>
        <button aria-label="Document preview"><svg viewBox="0 0 24 24"><path d="M2 15l7-8 9 10-7 6-6-2z" fill="#ccc" stroke="#666"/><path d="M8 6l7-4 8 4-1 7-6 5z" fill="#62b81c" stroke="#250"/><ellipse cx="18" cy="7" rx="3.500" ry="3" fill="#381" stroke="#cf8"/><path d="M3 2l17 19" stroke="#111" stroke-width="1.500"/></svg></button>
        <button aria-label="Mesh quality"><svg viewBox="0 0 24 24"><circle cx="12" cy="12" r="10" fill="#d4d4d4" stroke="#444"/><path d="M12 2a10 10 0 0 0 0 20z" fill="#f08010"/><path d="M12 12h10a10 10 0 0 1-10 10z" fill="#999"/><path d="M12 12v10a10 10 0 0 1-10-10z" fill="#b85408"/><circle cx="8" cy="8" r="3" fill="#fc8"/></svg></button>
        <i class="sep slim"></i>
        <button aria-label="Materials"><svg viewBox="0 0 24 24"><path d="M8 2l9 0 6 7-2 9-8 5-9-4-2-9z" fill="url(#ball)" stroke="#124"/></svg></button>
        <i class="caret"></i>
      </div>
    </div>

    <div class="canvas">
      <svg class="wires">
        <defs>
          <pattern id="ghGrid" width="105.700" height="35.250" patternUnits="userSpaceOnUse" x="697" y="212"><path d="M0 .5H106M.5 0V36" stroke="#bcb9b1" fill="none"/></pattern>
        </defs>
        <g transform="translate(-671 -203)">
          <rect x="671" y="203" width="1800" height="1200" fill="url(#ghGrid)"/>
          <g id="treeWires">
            <path d="M728 252C800 252 812 194 895 194"/>
            <path d="M728 252C790 252 718 353 782 353"/>
            <path d="M857 353C876 353 876 336 895 336"/>
            <path d="M992 194C1170 194 1190 373 1380 373"/>
            <path d="M992 336C1170 336 1170 492 1380 492"/>
          </g>
          <path class="wire" d="M1156 400C1180 400 1180 392 1205 392"/>
          <path class="wire" d="M1156 400C1220 400 1145 507 1211 507"/>
          <path class="wire" d="M1304 392.500C1330 392 1340 394 1400 394"/>
          <path class="wire" d="M1309 507C1330 507 1345 512 1400 514"/>
          <path class="wire double" d="M677 427C712 427 712 408 665 386"/>
          <path class="wire double-in" d="M677 427C712 427 712 408 665 386"/>
        </g>
      </svg>

      <div class="node dark unflatten"><div class="ins"><span>Tree</span><span>Guide</span></div><b>Unflatten Tree</b><div class="outs"><span>Tree</span></div></div>
      <div class="node light nurbs-a"><div class="ins"><span>Vertices</span><span>Degree</span><span>Periodic</span></div><b>Nurbs Curve</b><div class="outs"><span>Curve</span><span>Length</span><span>Domain</span></div></div>
      <div class="node dark flip"><div class="ins"><span>Data</span></div><b>Flip Matrix</b><div class="outs"><span>Data</span></div></div>
      <div class="node light nurbs-b"><div class="ins"><span>Vertices</span><span>Degree</span><span>Periodic</span></div><b>Nurbs Curve</b><div class="outs"><span>Curve</span><span>Length</span><span>Domain</span></div></div>
      <div class="node dark unit-x"><div class="ins"><span>Factor</span></div><b>Unit X</b><div class="outs"><span>Unit vector</span></div></div>
      <div class="node dark unit-y"><div class="ins"><span>Factor</span></div><b>Unit Y</b><div class="outs"><span>Unit vector</span></div></div>
      <div class="node dark stub"><div class="outs"><span></span></div></div>
      <div class="slider slider-a"><label for="s1">Number Slider</label><div class="track"><input id="s1" type="range" min="0" max="1" step="0.01" value="0.1"><output for="s1">0.10</output></div></div>
      <div class="slider slider-b"><label for="s2">Number Slider</label><div class="track"><input id="s2" type="range" min="0" max="1" step="0.01" value="0.5"></div></div>

      <div class="widgets">
        <svg viewBox="0 0 24 24"><path d="M5 20V6" stroke="#000" stroke-width="2"/><path d="M2 8l3-6 3 6z"/><use href="#dot" x="5" y="19"/><text x="15" y="15" class="glyph why">y</text></svg>
        <svg viewBox="0 0 24 24"><path d="M6 2h12l6 10-6 10H6L0 12z" fill="#222" stroke="#000"/><ellipse cx="12" cy="12" rx="9" ry="5.500" transform="rotate(-40 12 12)" fill="none" stroke="#ddd" stroke-width="1.500"/><ellipse cx="12" cy="12" rx="5" ry="2.500" transform="rotate(-40 12 12)" fill="none" stroke="#ddd" stroke-width="1.500"/></svg>
      </div>
      <svg class="compass" viewBox="0 0 52 46">
        <path d="M10 18q4-12 15-13" fill="none" stroke="#000" stroke-width="4"/><path d="M32 4q10 0 15 9" fill="none" stroke="#000" stroke-width="3"/><path d="M0 14l7-3 4 5-1 6z"/>
        <circle cx="30" cy="25" r="20" fill="url(#dial)" stroke="#222" stroke-width="1"/><circle cx="30" cy="25" r="18.500" fill="none" stroke="#fff" stroke-width="2"/>
        <path d="M32 6l8 2-5 4zM12 16l5 6-6 1zM48 28l-6 2 4 5zM22 43l5-6 1 6z" fill="#fff"/>
      </svg>
    </div>

    <footer class="gh-status"><span>...</span><span class="version">1.0.0008</span><i class="resize"></i></footer>
  </section>

  <footer class="taskbar">
    <button class="start" aria-label="Start"><svg viewBox="0 0 16 16"><path d="M0 2.200l6.500-.9v6.200H0zM7.300 1.200L16 0v7.500H7.300zM0 8.300h6.500v6.300L0 13.700zM7.300 8.300H16V16l-8.700-1.200z" fill="#fff"/></svg></button>
    <label class="search"><svg viewBox="0 0 16 16"><circle cx="10" cy="6" r="5" /><path d="M6.500 9.500L1 15"/></svg><input type="text" placeholder="Type here to search" aria-label="Search"></label>
    <button class="task task-view" aria-label="Task view"><svg viewBox="0 0 24 24"><path d="M4 4v3h10V4M4 20v-3h10v3M4 9.500h10v5H4zM18.500 4v4M18.500 16v4" fill="none" stroke="#eee" stroke-width="1.200"/><path d="M17 9.500h3v4h-3z" fill="#eee"/></svg></button>
    <div class="tasks">
      <button class="task alert" aria-label="Edge"><svg viewBox="0 0 24 24"><circle cx="12" cy="12" r="11.500" fill="url(#edge)"/><path d="M1 10q4-6 10-3 5 3 1 7-1 4 5 4 3 0 5-1-4 7-12 6Q1 21 1 10z" fill="#0d63b5"/><path d="M12 10q3 2 0 5 1 3 5 3h4q3-3 2-6-2 4-6 3-2-1-1-3 0-4-4-2z" fill="#a55f27"/></svg></button>
      <button class="task open" aria-label="File Explorer"><svg viewBox="0 0 24 24"><path d="M1 3h9l2 3H1z" fill="#e09b10"/><path d="M1 5h22v16H1z" fill="#ffd768"/><path d="M5 13h14v8h-4v-4H9v4H5z" fill="#2f8fe0"/></svg></button>
      <button class="task" aria-label="Mail"><svg viewBox="0 0 24 24"><path d="M0 9l12-8 12 8v14H0z" fill="#0f5fae"/><path d="M2 8h20v8H2z" fill="#f4f4f4"/><path d="M0 9l12 8 12-8v14H0z" fill="#2fb3ee"/><path d="M0 23l12-8 12 8z" fill="#1a8fdc"/></svg></button>
      <button class="task open" aria-label="Snipping Tool"><svg viewBox="0 0 24 24"><ellipse cx="11" cy="14" rx="10" ry="6" transform="rotate(-20 11 14)" fill="#888"/><ellipse cx="12" cy="9" rx="11" ry="6.500" transform="rotate(-20 12 9)" fill="#eee" stroke="#c8202a" stroke-width="2"/><path d="M12 4l2 12M7 8l10 5" stroke="#777"/><circle cx="14" cy="19" r="2.500" fill="none" stroke="#2a8fe0" stroke-width="2"/><circle cx="20" cy="16" r="2.500" fill="none" stroke="#2a8fe0" stroke-width="2"/></svg></button>
      <button class="task open current" aria-label="Rhino 8"><svg viewBox="0 0 24 24"><use href="#rhino"/><text x="16" y="9" class="rhino-eight">8</text></svg></button>
      <button class="task open" aria-label="Notepad"><svg viewBox="0 0 24 24"><path d="M7 3l14 0-3 20H1z" fill="#8cc"/><path d="M7 3l14 0-2 14q-8 6-17 4z" fill="#c4e8ea"/><path d="M7 3h14l-1 4H6z" fill="#4d8f96"/><path d="M21 3l2 3-4 17h-3z" fill="#ddd"/></svg></button>
      <button class="task open" aria-label="CLO"><svg viewBox="0 0 24 24"><path d="M5 1h18v18l-4 4H1V5z" fill="#1e66e6" stroke="#fff" stroke-width="1.500"/><path d="M16 8h-3a4 4 0 0 0 0 8h3" fill="none" stroke="#fff" stroke-width="2"/></svg></button>
      <button class="task open" aria-label="Photos"><svg viewBox="0 0 24 24"><rect x="1" y="1" width="22" height="22" rx="2" fill="url(#photo)"/><path d="M1 19L11 9l12 12v2H1z" fill="#2fa8f4"/><path d="M1 20L11 10l4 4-9 9H1z" fill="#7fdcff"/><circle cx="17" cy="5" r="1.800" fill="#fff"/></svg></button>
    </div>
    <div class="tray">
      <button class="weather"><svg viewBox="0 0 20 20"><circle cx="10" cy="10" r="10" fill="url(#sun)"/></svg><span>72°F</span><span>Sunny</span></button>
      <button class="tray-icon" aria-label="Hidden icons"><svg viewBox="0 0 16 16"><path d="M2 11l6-6 6 6"/></svg></button>
      <button class="tray-icon" aria-label="Meet now"><svg viewBox="0 0 16 16"><rect x="3" y="5" width="7" height="7" rx="1"/><path d="M10 8l3-2v5l-3-2M4 3q4-3 8 0M4 14q4 3 8 0"/></svg></button>
      <button class="tray-icon" aria-label="Battery"><svg viewBox="0 0 16 16"><path d="M5.500 5.500h9v6h-8M15.500 7v3M1 3v3h3V3M2.500 6v5.500H5"/><path d="M6 7h7v3H6z" fill="#fff"/></svg></button>
      <button class="tray-icon" aria-label="Network"><svg viewBox="0 0 16 16"><circle cx="8" cy="8" r="7"/><ellipse cx="8" cy="8" rx="3" ry="7"/><path d="M1 8h14M2 4h12M2 12h12"/><circle cx="12" cy="12" r="3.500" fill="#1e1e1e"/><path d="M10 10l4 4"/></svg></button>
      <button class="tray-icon" aria-label="Volume"><svg viewBox="0 0 16 16"><path d="M1 6h2l4-4v12L3 10H1zM9 6q1.500 2 0 4M11 4.500q3 3.500 0 7M13 3q4.500 5 0 10"/></svg></button>
      <span class="lang">ENG</span>
      <time class="clock">5:22 AM<br>10/29/2024</time>
      <button class="tray-icon notify" aria-label="Notifications"><svg viewBox="0 0 16 16"><path d="M.5 1.500h15v11H10L8 15l-2-2.500H.5z"/></svg></button>
      <i class="show-desktop"></i>
    </div>
  </footer>
</div>

<script src="script.js"></script>
</body>
</html>
```

FILE: styles.css
```
* {
  box-sizing: border-box;
}

body {
  margin: 0;
  font-family: "Open Sans", "Noto Sans", sans-serif;
  font-size: 11px;
  line-height: 16px;
  overflow: hidden;
}

button {
  flex: none;
  font: inherit;
  color: inherit;
  background: none;
  border: 0;
  padding: 0;
}

a {
  color: inherit;
  text-decoration: none;
  white-space: nowrap;
}

p {
  margin: 0;
}

svg {
  display: block;
}

.defs {
  position: absolute;
  width: 0;
  height: 0;
}

.desktop {
  display: grid;
  grid-template-columns: 49fr 51fr;
  grid-template-rows: minmax(0, 1fr) 40px;
  height: 100vh;
}

/* Rhino window */

.rhino {
  display: flex;
  flex-direction: column;
  min-width: 0;
  overflow: hidden;
  background: #444;
  color: #eee;
  padding-bottom: 2px;
}

.rhino-title {
  display: flex;
  align-items: center;
  gap: 5px;
  flex: 0 0 23px;
  padding-left: 2px;
  background: #fff;
  color: #999;
  white-space: nowrap;
}

.app-icon {
  width: 16px;
  height: 16px;
}

.rhino-eight {
  font-size: 10px;
  fill: #fff;
}

.rhino-menu {
  display: flex;
  justify-content: space-between;
  flex: 0 0 20px;
  margin-right: -20px;
  padding-left: 8px;
  background: #333;
}

.docked {
  display: flex;
  gap: 1px;
  padding-left: 2px;
}

.grip {
  display: flex;
  flex-direction: column;
  justify-content: center;
  align-items: center;
  gap: 3px;
  width: 10px;
  background: #333;
  border-radius: 4px 0 0 4px;
}

.grip i {
  width: 3px;
  height: 3px;
  border: 1px solid #777;
  border-radius: 50%;
}

.grip.flat {
  flex-direction: row;
  width: auto;
  height: 10px;
  border-bottom: 1px solid #4a4a4a;
}

.command {
  flex: 0 0 54px;
}

.command-area {
  display: flex;
  flex-direction: column;
  flex: 1;
  min-width: 0;
  background: #222;
}

.command-log {
  display: flex;
  flex-direction: column;
  justify-content: flex-end;
  height: 36px;
  padding-left: 1px;
  line-height: 15px;
  overflow: hidden;
  border-bottom: 1px solid #888;
  white-space: nowrap;
}

.prompt {
  display: flex;
  padding-left: 1px;
  font-weight: bold;
}

.prompt-input {
  flex: 1;
  border: 0;
  outline: 0;
  background: none;
  color: #fff;
}

.toolbar {
  flex: 0 0 63px;
  margin-top: 3px;
}

.toolbar-area {
  flex: 1;
  min-width: 0;
}

.toolbar-tabs {
  display: flex;
  height: 19px;
  line-height: 21px;
  color: #888;
}

.toolbar-tabs a {
  padding: 0 10px 0 11px;
}

.toolbar-tabs .active {
  padding: 0 11px 0 10px;
  background: #333;
  color: #fff;
  border-radius: 0 8px 0 0;
}

.toolbar-icons {
  display: flex;
  height: 44px;
  background: #333;
}

.tool {
  width: 28px;
  height: 28px;
  padding: 2px;
}

.tool svg,
.panel-tab svg {
  width: 24px;
  height: 24px;
  fill: none;
  stroke: #ddd;
  stroke-width: 1;
}

.toolbar-icons .tool {
  padding: 2px 3px 2px 1px;
}

.more {
  background: linear-gradient(135deg, transparent 50%, #aaa 50%) right bottom / 5px 5px no-repeat;
}

.rhino-main {
  display: flex;
  flex: 1;
  min-height: 0;
  padding-top: 3px;
}

.sidebar {
  display: flex;
  flex-direction: column;
  flex: 0 0 119px;
  padding-left: 2px;
}

.palette {
  flex: 0 0 328px;
  background: #333;
  border-radius: 6px 6px 0 0;
}

.palette .grip {
  border-radius: 6px 6px 0 0;
}

.palette-grid {
  display: grid;
  grid-template-columns: repeat(4, 28px);
}

.panel-head {
  display: flex;
  align-items: center;
  justify-content: space-between;
  flex: none;
  height: 19px;
  margin-top: 2px;
  padding: 0 3px 0 5px;
  background: #333;
  color: #999;
  border-radius: 4px 4px 0 0;
}

.gear {
  width: 14px;
  height: 14px;
}

.panel-tabs {
  display: flex;
  flex: none;
  height: 20px;
  margin-top: 1px;
}

.panel-tab {
  width: 36px;
  padding-left: 6px;
}

.panel-tab svg {
  height: 20px;
}

.panel-tab.active {
  background: #333;
  border-radius: 6px 6px 0 0;
}

.osnaps {
  display: flex;
  justify-content: space-between;
  flex: 1;
  min-height: 0;
  overflow: hidden;
  padding: 4px 4px 0 3px;
  background: #333;
}

.osnap-list label {
  display: flex;
  align-items: center;
  gap: 5px;
  height: 16px;
}

.osnap-list input {
  appearance: none;
  width: 14px;
  height: 14px;
  margin: 0;
  border: 1px solid #888;
  background: #555;
}

.osnap-list input:checked::before {
  content: "";
  display: block;
  width: 5px;
  height: 9px;
  margin: 0 auto;
  border: solid #fff;
  border-width: 0 2px 2px 0;
  transform: rotate(40deg);
}

.expand {
  width: 8px;
  height: 8px;
}

.view-column {
  display: flex;
  flex-direction: column;
  flex: 1;
  min-width: 0;
  padding-left: 3px;
}

.viewport {
  position: relative;
  flex: 1;
  min-height: 0;
  overflow: hidden;
  border: solid #888;
  border-width: 1px 0 0 1px;
  background: #9ca3ab;
}

.scene {
  width: 100%;
  height: 100%;
}

.axis {
  font-size: 14px;
  fill: #666;
}

.view-label {
  position: absolute;
  top: 0;
  left: 0;
  display: flex;
  align-items: center;
  gap: 7px;
  height: 18px;
  padding-left: 7px;
  background: #0057ff;
  color: #fff;
  font-size: 12px;
  font-weight: bold;
}

.view-label i {
  display: flex;
  align-items: center;
  justify-content: center;
  width: 11px;
  height: 16px;
  border-left: 1px solid #fff;
}

.view-label i::after {
  content: "";
  border: 4px solid transparent;
  border-top-color: #fff;
  border-bottom: 0;
}

.view-tabs {
  display: flex;
  align-items: flex-start;
  flex: 0 0 21px;
  min-height: 0;
  padding-left: 3px;
  line-height: 22px;
  color: #888;
}

.view-tabs a {
  padding: 0 7px;
}

.view-tabs .active {
  height: 20px;
  margin-left: 2px;
  padding: 0 7px 0 5px;
  line-height: 20px;
  background: #222;
  color: #fff;
  border: 1px solid #999;
  border-top: 0;
  border-radius: 0 0 5px 5px;
}

.add-view {
  padding: 6px 8px;
}

.add-view svg {
  width: 9px;
  height: 9px;
}

.rhino-status {
  display: flex;
  align-items: center;
  flex: 0 0 21px;
  margin-left: 2px;
  padding-left: 5px;
  background: #333;
  color: #bbb;
  white-space: nowrap;
}

.rhino-status span {
  flex: none;
}

.side-toggle {
  width: 14px;
  height: 14px;
  margin-right: 20px;
  border: 2px solid #bbb;
  border-left-width: 5px;
}

.rhino-status .w-plane { width: 77px; }
.rhino-status .w-x { width: 85px; }
.rhino-status .w-y { width: 100px; }
.rhino-status .w-z { width: 71px; }
.rhino-status .w-units { width: 83px; }
.rhino-status .w-layer { width: 176px; }

.swatch {
  flex: none;
  width: 16px;
  height: 16px;
  margin-right: 6px;
  border: 1px solid #eee;
  background: #000;
}

/* Grasshopper window */

.gh {
  z-index: 1;
  display: flex;
  flex-direction: column;
  min-width: 0;
  border: solid #666;
  border-width: 1px 0 1px 2px;
  background: #f0f0f0;
  box-shadow: 0 0 14px rgba(0, 0, 0, 0.45);
}

.gh-title {
  display: flex;
  align-items: center;
  justify-content: space-between;
  flex: 0 0 30px;
  padding-left: 6px;
  background: #fff;
  color: #000;
}

.win-buttons {
  display: flex;
}

.win-buttons button {
  width: 46px;
  padding-left: 22px;
}

.win-buttons svg {
  width: 12px;
  height: 12px;
  fill: none;
  stroke: #000;
}

.gh-menu {
  display: flex;
  align-items: center;
  flex: 0 0 29px;
  gap: 20px;
  padding: 0 5px 0 12px;
  background: linear-gradient(90deg, #f0f0f0, #fdfdfd);
}

.doc-name {
  margin-left: auto;
}

.gh-tabs {
  display: flex;
  flex: 0 0 22px;
  min-height: 0;
  line-height: 24px;
  color: #777;
}

.gh-tabs a {
  padding: 0 11px 0 7px;
}

.gh-tabs .active {
  z-index: 1;
  height: 22px;
  padding: 0 7px;
  line-height: 20px;
  color: #000;
  border: 1px solid #888;
  border-bottom: 0;
  border-radius: 7px 7px 0 0;
  background: linear-gradient(#fff, #fff 60%, #ddd);
}

.ribbon {
  display: flex;
  gap: 3px;
  flex: 0 0 89px;
  padding: 2px 1px 14px;
  border-top: 1px solid #888;
  background: linear-gradient(#d4d4d4, #f0f0f0 80%);
}

.ribbon-panel {
  display: flex;
  flex-direction: column;
  height: 72px;
  overflow: hidden;
  border: 1px solid #777;
  border-radius: 4px;
  background: linear-gradient(#d8d8d8, #eee);
}

.ribbon-icons {
  display: grid;
  flex: 1;
  align-content: start;
  padding: 2px 3px 0;
}

.ribbon-icons button {
  height: 28px;
}

.ribbon-icons svg {
  width: 24px;
  height: 24px;
}

.cols-2 {
  grid-template-columns: 38px 25px;
}

.cols-3 {
  grid-template-columns: 38px 38px 25px;
}

.cols-point {
  grid-template-columns: 38px 38px 38px 28px 25px;
}

.glyph {
  font: bold 10px "Liberation Sans", sans-serif;
  text-anchor: middle;
}

.glyph.small {
  font-weight: normal;
  font-size: 8px;
}

.glyph.vee {
  font: italic bold 16px "Liberation Serif", serif;
}

.glyph.why {
  font: bold 16px "Liberation Serif", serif;
}

.ribbon-name {
  position: relative;
  height: 13px;
  padding-right: 12px;
  background: linear-gradient(#333, #111);
  color: #fff;
  font-size: 10px;
  line-height: 12px;
  text-align: center;
}

.ribbon-name b {
  position: absolute;
  right: 3px;
  top: 3px;
  width: 7px;
  height: 7px;
  background: linear-gradient(#aaa, #aaa) center / 1px 7px no-repeat, linear-gradient(#aaa, #aaa) center / 7px 1px no-repeat, linear-gradient(#aaa, #aaa) center / 3px 3px no-repeat;
}

.gh-toolbar {
  display: flex;
  align-items: center;
  flex: 0 0 32px;
  padding-left: 1px;
  border-top: 1px solid #666;
  background: linear-gradient(#fff, #f0f0f0);
}

.gh-toolbar button {
  padding: 3px 0;
  border: 1px solid transparent;
}

.gh-toolbar svg {
  width: 22px;
  height: 22px;
}

.gh-toolbar .gap-l {
  margin-left: 6px;
}

.gh-toolbar .on {
  border-color: #0078d7;
}

.sep {
  width: 1px;
  height: 20px;
  margin: 0 4px 0 8px;
  background: #bbb;
}

.sep.wide {
  margin: 0 8px;
}

.sep.slim {
  margin: 0 2px;
}

.zoom {
  appearance: none;
  width: 158px;
  height: 23px;
  margin-right: 5px;
  padding: 0 2px;
  font: inherit;
  border: 1px solid #777;
  border-radius: 0;
  background: #fff;
  background-image: linear-gradient(45deg, transparent 44%, #555 44% 56%, transparent 56%), linear-gradient(-45deg, transparent 44%, #555 44% 56%, transparent 56%);
  background-position: right 8px top 9px, right 4px top 9px;
  background-size: 5px 5px;
  background-repeat: no-repeat;
}

.caret {
  margin: 0 6px;
  border: 3px solid transparent;
  border-top-color: #000;
  border-bottom: 0;
}

.gh-toolbar-right {
  display: flex;
  align-items: center;
  margin-left: auto;
}

.gh-toolbar-right .caret {
  margin: 0;
}

.gh-toolbar-right button {
  padding: 2px;
}

.canvas {
  position: relative;
  flex: 1;
  min-height: 0;
  overflow: hidden;
  background: #d4d0c8;
}

.wires {
  width: 100%;
  height: 100%;
}

.wire {
  fill: none;
  stroke: #555;
  stroke-width: 2;
}

.double {
  stroke-width: 4;
}

.double-in {
  stroke: #cfcbc3;
  stroke-width: 2;
}

.tree-out,
.tree-in {
  fill: none;
  stroke: #55534f;
  stroke-width: 4;
  stroke-linecap: round;
  stroke-dasharray: 6 7;
}

.tree-in {
  stroke: #b5b2ab;
  stroke-width: 2;
}

/* nodes on the free canvas */

.node,
.slider {
  position: absolute;
  display: flex;
  font-family: "Noto Sans", sans-serif;
  font-size: 7px;
  line-height: 9px;
  color: #222;
  border: 1px solid #333;
  border-radius: 3px;
}

.dark {
  background: linear-gradient(#aaa8b6, #8c8a98);
}

.light {
  background: linear-gradient(#e4e4e4, #c4c4c4);
}

.node b {
  flex: 0 0 18px;
  margin: 1px 0;
  font-size: 9px;
  font-weight: 600;
  line-height: 16px;
  color: #fff;
  text-align: center;
  white-space: nowrap;
  writing-mode: vertical-rl;
  transform: rotate(180deg);
  border: 1px solid #111;
  border-radius: 3px;
  background: linear-gradient(90deg, #2c2c2c, #4a4a4a);
}

.ins,
.outs {
  display: flex;
  flex-direction: column;
  justify-content: space-around;
  flex: 1;
}

.ins span,
.outs span {
  position: relative;
  padding: 0 3px;
  white-space: nowrap;
}

.ins span {
  text-align: right;
}

.ins span::before,
.outs span::after,
.slider::after {
  content: "";
  position: absolute;
  top: calc(50% - 3px);
  width: 4px;
  height: 6px;
  border: 1px solid #000;
  background: #fff;
}

.ins span::before {
  left: -4px;
  border-right: 0;
  border-radius: 3px 0 0 3px;
}

.outs span::after,
.slider::after {
  right: -4px;
  border-left: 0;
  border-radius: 0 3px 3px 0;
}

.unflatten {
  top: 12px;
  left: -25px;
  width: 78px;
  height: 76px;
}

.nurbs-a,
.nurbs-b {
  top: -20px;
  left: 226px;
  width: 92px;
  height: 67px;
}

.nurbs-b {
  top: 121px;
  left: 227px;
}

.flip {
  top: 121px;
  left: 113px;
  width: 70px;
  height: 60px;
}

.unit-x,
.unit-y {
  top: 170px;
  left: 535px;
  width: 96px;
  height: 39px;
}

.unit-y {
  top: 285px;
  left: 541px;
}

.unit-x .ins,
.unit-y .ins {
  flex: 0 0 29px;
}

.stub {
  top: 195px;
  left: -20px;
  width: 25px;
  height: 58px;
}

.slider {
  align-items: stretch;
  width: 145px;
  height: 15px;
  line-height: 13px;
}

.slider-a {
  top: 189px;
  left: 339px;
}

.slider-b {
  top: 241px;
  left: 629px;
}

.slider label {
  width: 59px;
  padding-left: 4px;
  border-right: 1px solid #333;
  background: linear-gradient(#aaa8b6, #8c8a98);
  white-space: nowrap;
}

.track {
  position: relative;
  flex: 1;
  background: linear-gradient(#e4e4e4, #c4c4c4);
}

.track input {
  appearance: none;
  display: block;
  width: 78px;
  height: 13px;
  margin: 0 3px;
  background: linear-gradient(#aaa, #aaa) 3px 6px / 72px 1px no-repeat, repeating-linear-gradient(90deg, #aaa 0 1px, transparent 1px 12px) 3px 4px / 73px 4px no-repeat;
}

.track input::-webkit-slider-thumb {
  appearance: none;
  width: 6px;
  height: 6px;
  border: 1px solid #000;
  border-radius: 50%;
  background: #fff;
  box-shadow: 0 0 0 1px #000;
}

.track output {
  position: absolute;
  top: 0;
  left: 19px;
}

.widgets {
  position: absolute;
  left: 0;
  bottom: 0;
  display: flex;
  gap: 2px;
  width: 63px;
  height: 28px;
  padding: 1px 2px;
  border: 1px solid #000;
  background: linear-gradient(#fff, #aaa);
}

.widgets svg {
  width: 24px;
  height: 24px;
}

.compass {
  position: absolute;
  right: 5px;
  bottom: 9px;
  width: 52px;
  height: 46px;
}

.gh-status {
  display: flex;
  align-items: center;
  flex: 0 0 24px;
  gap: 23px;
  padding: 2px 1px 0 5px;
  border-top: 1px solid #fff;
  box-shadow: inset 0 1px #ccc;
}

.version {
  margin-left: auto;
  color: #777;
}

.resize {
  align-self: flex-end;
  width: 8px;
  height: 8px;
  margin-bottom: 2px;
  background: radial-gradient(circle, #aaa 1px, transparent 1px) 0 0 / 4px 4px;
  clip-path: polygon(100% 0, 100% 100%, 0 100%);
}

/* taskbar */

.taskbar {
  z-index: 2;
  grid-column: 1 / -1;
  display: flex;
  background: #1e1e1e;
  color: #fff;
}

.start {
  width: 48px;
  padding: 0 16px;
}

.start svg,
.search svg {
  width: 16px;
  height: 16px;
}

.search {
  display: flex;
  align-items: center;
  gap: 11px;
  width: 288px;
  padding-left: 12px;
  border: 1px solid #5a5a5a;
  background: #333;
}

.search svg {
  fill: none;
  stroke: #eee;
}

.search input {
  flex: 1;
  min-width: 0;
  padding: 0;
  border: 0;
  outline: 0;
  background: none;
  font: inherit;
  font-size: 14px;
}

.search input::placeholder {
  color: #ccc;
}

.task {
  display: flex;
  align-items: center;
  justify-content: center;
  width: 48px;
  border-bottom: 2px solid transparent;
}

.task svg {
  width: 24px;
  height: 24px;
}

.tasks {
  display: flex;
  gap: 1px;
  margin-left: 3px;
}

.open {
  background: linear-gradient(#76b9ed, #76b9ed) center bottom / 40px 2px no-repeat;
  background-origin: border-box;
  background-clip: border-box;
}

.alert {
  background: #a55f27;
  border-bottom-color: #ff7a00;
}

.current {
  background: linear-gradient(90deg, #4a4a4a 44px, #333 44px);
  border-bottom-color: #76b9ed;
}

.tray {
  display: flex;
  align-items: center;
  margin-left: auto;
}

.weather {
  display: flex;
  align-items: center;
  gap: 9px;
  margin-right: 19px;
  font-size: 13px;
}

.weather svg {
  width: 20px;
  height: 20px;
}

.tray-icon {
  padding: 0 4px;
}

.tray-icon svg {
  width: 16px;
  height: 16px;
  fill: none;
  stroke: #fff;
  stroke-width: 1;
}

.lang {
  margin-left: 8px;
}

.clock {
  width: 78px;
  line-height: 18px;
  text-align: center;
}

.notify {
  padding-left: 5px;
}

.show-desktop {
  align-self: stretch;
  width: 5px;
  margin-left: 16px;
  border-left: 1px solid #666;
}
```

FILE: script.js
```
const SVG = "http://www.w3.org/2000/svg";

// point charges that push the grid away: x, y, strength, core radius
const charges = [
  [455, 340, 14, 20],
  [540, 322, 10, 4],
  [421, 405, 10, 4],
  [500, 406, 10, 4],
  [567, 398, 10, 4],
  [413, 487, 10, 4],
  [487, 475, 10, 4],
  [576, 471, 10, 4]
];
const sources = charges.map(c => [c[0], c[1]]);

function warp(x, y) {
  let dx = 0, dy = 0;
  charges.forEach((c, i) => {
    const vx = x - sources[i][0], vy = y - sources[i][1];
    const r = Math.hypot(vx, vy);
    const k = c[2] * Math.exp(-r * r / 1900) / Math.sqrt(r * r + c[3] * c[3]);
    dx += vx * k;
    dy += vy * k;
  });
  return [x + dx, y + dy];
}

// shift each source so that its hole opens where the charge is shown
for (let pass = 0; pass < 6; pass++) {
  charges.forEach((c, i) => {
    const p = warp(sources[i][0], sources[i][1]);
    sources[i][0] += (c[0] - p[0]) * 0.7;
    sources[i][1] += (c[1] - p[1]) * 0.7;
  });
}

function meshPath() {
  const x0 = 380, y0 = 269, w = 244, h = 246, cells = 46, steps = 110;
  let d = "";
  for (let i = 0; i <= cells; i++) {
    for (let j = 0; j <= steps; j++) {
      const p = warp(x0 + w * i / cells, y0 + h * j / steps);
      d += (j ? "L" : "M") + p[0].toFixed(1) + " " + p[1].toFixed(1);
    }
    for (let j = 0; j <= steps; j++) {
      const p = warp(x0 + w * j / steps, y0 + h * i / cells);
      d += (j ? "L" : "M") + p[0].toFixed(1) + " " + p[1].toFixed(1);
    }
  }
  return d;
}

function add(parent, tag, attrs) {
  const el = document.createElementNS(SVG, tag);
  for (const name in attrs) el.setAttribute(name, attrs[name]);
  parent.appendChild(el);
}

const meshes = document.getElementById("meshes");
const d = meshPath();
add(meshes, "path", { d: d, fill: "none", stroke: "#960000", "stroke-width": 1.8, "shape-rendering": "crispEdges" });
add(meshes, "path", { d: d, fill: "none", stroke: "#ffff00", "stroke-width": 2.8, "shape-rendering": "crispEdges", transform: "translate(-263 0)" });
charges.forEach((c, i) => {
  add(meshes, "circle", { cx: c[0], cy: c[1], r: i ? 3 : 2, fill: "#fff", stroke: "#222", "stroke-width": 1.2 });
});

// every tree wire is a dark dash with a lighter core
document.querySelectorAll("#treeWires path").forEach(path => {
  const core = path.cloneNode();
  path.setAttribute("class", "tree-out");
  core.setAttribute("class", "tree-in");
  path.after(core);
});
```
